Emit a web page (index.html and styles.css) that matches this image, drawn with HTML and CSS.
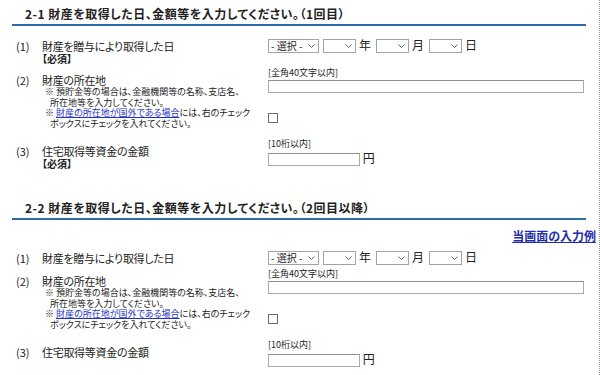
FILE: index.html
```html
<!DOCTYPE html>
<html lang="ja">
<head>
    <meta charset="UTF-8">
    <title>財産の取得 - 入力</title>
    <link rel="stylesheet" href="styles.css">
</head>
<body>
<div class="page">

    <!-- 1回目 -->
    <section class="block">
        <h2 class="block-title">2-1 財産を取得した日、金額等を入力してください。（1回目）</h2>

        <div class="row row-date">
            <span class="num">(1)</span>
            <div class="label">
                財産を贈与により取得した日
                <b class="req">【必須】</b>
            </div>
            <div class="ctrl date">
                <span class="sel sel-era"><select><option>- 選択 -</option></select><svg width="7" height="4" viewBox="0 0 7 4"><path d="M0.5 0.5L3.5 3.5L6.5 0.5"/></svg></span>
                <span class="sel"><select><option></option></select><svg width="7" height="4" viewBox="0 0 7 4"><path d="M0.5 0.5L3.5 3.5L6.5 0.5"/></svg></span>
                <span class="unit">年</span>
                <span class="sel"><select><option></option></select><svg width="7" height="4" viewBox="0 0 7 4"><path d="M0.5 0.5L3.5 3.5L6.5 0.5"/></svg></span>
                <span class="unit">月</span>
                <span class="sel"><select><option></option></select><svg width="7" height="4" viewBox="0 0 7 4"><path d="M0.5 0.5L3.5 3.5L6.5 0.5"/></svg></span>
                <span class="unit">日</span>
            </div>
        </div>

        <div class="row row-place">
            <span class="num">(2)</span>
            <div class="label">
                財産の所在地
                <p class="note">※&nbsp;預貯金等の場合は、金融機関等の名称、支店名、<br>所在地等を入力してください。</p>
                <p class="note">※&nbsp;<a href="#">財産の所在地が国外である場合</a>には、右のチェック<br>ボックスにチェックを入れてください。</p>
            </div>
            <div class="ctrl">
                <span class="hint">[全角40文字以内]</span>
                <input type="text" class="txt txt-wide">
                <input type="checkbox" class="chk">
            </div>
        </div>

        <div class="row row-amount">
            <span class="num">(3)</span>
            <div class="label">
                住宅取得等資金の金額
                <b class="req">【必須】</b>
            </div>
            <div class="ctrl">
                <span class="hint">[10桁以内]</span>
                <span class="yen"><input type="text" class="txt txt-num"> 円</span>
            </div>
        </div>
    </section>

    <!-- 2回目以降 -->
    <section class="block block-next">
        <h2 class="block-title">2-2 財産を取得した日、金額等を入力してください。（2回目以降）</h2>
        <div class="example"><a href="#">当画面の入力例</a></div>

        <div class="row row-date">
            <span class="num">(1)</span>
            <div class="label">財産を贈与により取得した日</div>
            <div class="ctrl date">
                <span class="sel sel-era"><select><option>- 選択 -</option></select><svg width="7" height="4" viewBox="0 0 7 4"><path d="M0.5 0.5L3.5 3.5L6.5 0.5"/></svg></span>
                <span class="sel"><select><option></option></select><svg width="7" height="4" viewBox="0 0 7 4"><path d="M0.5 0.5L3.5 3.5L6.5 0.5"/></svg></span>
                <span class="unit">年</span>
                <span class="sel"><select><option></option></select><svg width="7" height="4" viewBox="0 0 7 4"><path d="M0.5 0.5L3.5 3.5L6.5 0.5"/></svg></span>
                <span class="unit">月</span>
                <span class="sel"><select><option></option></select><svg width="7" height="4" viewBox="0 0 7 4"><path d="M0.5 0.5L3.5 3.5L6.5 0.5"/></svg></span>
                <span class="unit">日</span>
            </div>
        </div>

        <div class="row row-place">
            <span class="num">(2)</span>
            <div class="label">
                財産の所在地
                <p class="note">※&nbsp;預貯金等の場合は、金融機関等の名称、支店名、<br>所在地等を入力してください。</p>
                <p class="note">※&nbsp;<a href="#">財産の所在地が国外である場合</a>には、右のチェック<br>ボックスにチェックを入れてください。</p>
            </div>
            <div class="ctrl">
                <span class="hint">[全角40文字以内]</span>
                <input type="text" class="txt txt-wide">
                <input type="checkbox" class="chk">
            </div>
        </div>

        <div class="row row-amount">
            <span class="num">(3)</span>
            <div class="label">住宅取得等資金の金額</div>
            <div class="ctrl">
                <span class="hint">[10桁以内]</span>
                <span class="yen"><input type="text" class="txt txt-num"> 円</span>
            </div>
        </div>
    </section>

</div>
</body>
</html>
```

FILE: styles.css
```css
body {
    margin: 0;
    font-family: "Noto Sans CJK JP", "Liberation Sans", sans-serif;
    font-feature-settings: "palt";
    color: #222;
    background: #fff;
}
.page {
    box-sizing: border-box;
    width: 600px;
    height: 375px;
    overflow: hidden;
    padding: 6px 13px 0 12px;
    border-right: 1px dotted #9a9a9a;
}
.block-next { margin-top: 30px; }

.block-title {
    margin: 0;
    padding: 0 0 2px 13px;
    font-size: 12px;
    line-height: 16px;
    font-weight: bold;
    letter-spacing: 0.5px;
    color: #222;
    border-bottom: 2px solid #2a6aa6;
}

.example {
    margin: 9px -10px 0 0;
    text-align: right;
    font-size: 12px;
    line-height: 14px;
    font-weight: bold;
}
.example a { color: #1f2fa8; }

/* form rows */
.row {
    display: grid;
    grid-template-columns: 26px 226px 1fr;
    padding-left: 4px;
    font-size: 11px;
    line-height: 14px;
}
.row-date { margin-top: 12px; }
.block-next .row-date { margin-top: 7px; }
.row-place { margin-top: 3px; }
.block-next .row-place { margin-top: 4px; }
.row-amount { margin-top: 10px; }

.num, .label { padding-top: 1px; }
.label { letter-spacing: -0.3px; }
.row-place .num, .row-place .label,
.row-amount .num, .row-amount .label { padding-top: 5px; }

.req {
    display: block;
    font-size: 10px;
    line-height: 12px;
    letter-spacing: 0;
}
.note {
    margin: 0 0 0 3px;
    padding-left: 5px;
    text-indent: -5px;
    font-size: 9px;
    line-height: 10.5px;
    letter-spacing: 0;
}
.note a { color: #2231c4; }

.ctrl { display: flex; flex-direction: column; align-items: flex-start; }
.ctrl.date { flex-direction: row; align-items: flex-start; }

.hint {
    font-size: 9px;
    line-height: 10px;
    margin-bottom: 2px;
}

/* selects */
.sel {
    position: relative;
    display: inline-block;
    height: 14px;
    margin-right: 4px;
}
.sel select {
    appearance: none;
    box-sizing: border-box;
    width: 33px;
    height: 14px;
    margin: 0;
    padding: 0 0 0 2px;
    border: 1px solid #a3a3a3;
    border-radius: 0;
    background: #fff;
    font-family: inherit;
    font-size: 10px;
    line-height: 12px;
    color: #222;
}
.sel-era select { width: 51px; }
.sel svg {
    position: absolute;
    right: 4px;
    top: 6px;
    pointer-events: none;
}
.sel svg path { fill: none; stroke: #666; stroke-width: 1; }
.unit {
    font-size: 12px;
    line-height: 14px;
    margin: 0 5px 0 -1px;
}

/* inputs */
.txt {
    box-sizing: border-box;
    height: 13px;
    margin: 0;
    padding: 0;
    border: 1px solid #ababab;
    border-top-color: #8e8e8e;
    border-radius: 0;
    background: #fff;
}
.txt-wide { width: 316px; }
.txt-num { width: 92px; vertical-align: middle; }
.yen { font-size: 12px; line-height: 13px; }
.chk {
    appearance: none;
    box-sizing: border-box;
    width: 10px;
    height: 10px;
    margin: 20px 0 0 0;
    border: 1px solid #6d6d6d;
    background: #fff;
}
```
